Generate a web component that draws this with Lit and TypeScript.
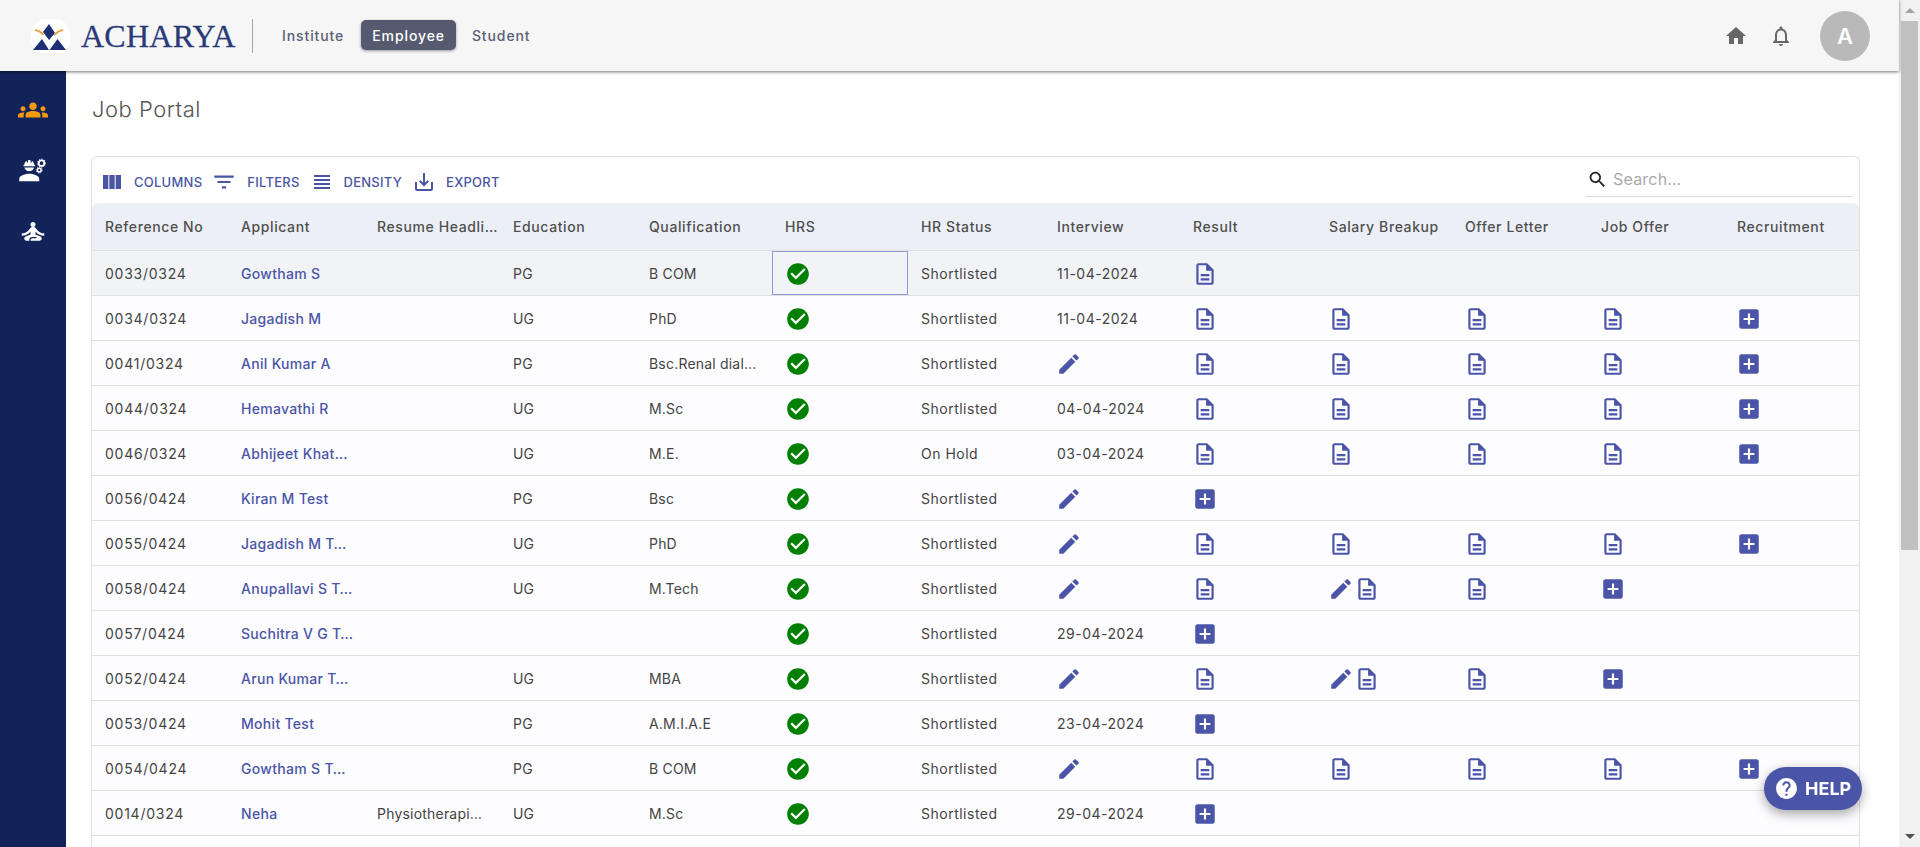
import { LitElement, html, css, svg } from "lit";
import { customElement } from "lit/decorators.js";

const P = {
  columns: "M14.67 5v14H9.33V5h5.34zm1 14H21V5h-5.33v14zm-7.34 0V5H3v14h5.33z",
  filter: "M10 18h4v-2h-4v2zM3 6v2h18V6H3zm3 7h12v-2H6v2z",
  density: "M4 15h16v-2H4v2zm0 4h16v-2H4v2zm0-8h16V9H4v2zm0-6v2h16V5H4z",
  save: "M19 12v7H5v-7H3v7c0 1.1.9 2 2 2h14c1.1 0 2-.9 2-2v-7h-2zm-6 .67l2.59-2.58L17 11.5l-5 5-5-5 1.41-1.41L11 12.67V3h2z",
  search: "M15.5 14h-.79l-.28-.27C15.41 12.59 16 11.11 16 9.5 16 5.91 13.09 3 9.5 3S3 5.91 3 9.5 5.91 16 9.5 16c1.61 0 3.09-.59 4.23-1.57l.27.28v.79l5 4.99L20.49 19l-4.99-5zm-6 0C7.01 14 5 11.99 5 9.5S7.01 5 9.5 5 14 7.01 14 9.5 11.99 14 9.5 14z",
  home: "M10 20v-6h4v6h5v-8h3L12 3 2 12h3v8z",
  bell: "M12 22c1.1 0 2-.9 2-2h-4c0 1.1.9 2 2 2zm6-6v-5c0-3.07-1.63-5.64-4.5-6.32V4c0-.83-.67-1.5-1.5-1.5s-1.5.67-1.5 1.5v.68C7.64 5.36 6 7.92 6 11v5l-2 2v1h16v-1l-2-2zm-2 1H8v-6c0-2.48 1.51-4.5 4-4.5s4 2.02 4 4.5v6z",
  check: "M12 2C6.48 2 2 6.48 2 12s4.48 10 10 10 10-4.48 10-10S17.52 2 12 2zm-2 15l-5-5 1.41-1.41L10 14.17l7.59-7.59L19 8l-9 9z",
  doc: "M8 16h8v2H8zm0-4h8v2H8zm6-10H6c-1.1 0-2 .9-2 2v16c0 1.1.89 2 1.99 2H18c1.1 0 2-.9 2-2V8l-6-6zm4 18H6V4h7v5h5v11z",
  edit: "M3 17.25V21h3.75L17.81 9.94l-3.75-3.75L3 17.25zM20.71 7.04c.39-.39.39-1.02 0-1.41l-2.34-2.34a.9959.9959 0 0 0-1.41 0l-1.83 1.83 3.75 3.75 1.83-1.83z",
  add: "M19 3H5c-1.11 0-2 .9-2 2v14c0 1.1.89 2 2 2h14c1.1 0 2-.9 2-2V5c0-1.1-.9-2-2-2zm-2 10h-4v4h-2v-4H7v-2h4V7h2v4h4v2z",
  help: "M12 2C6.48 2 2 6.48 2 12s4.48 10 10 10 10-4.48 10-10S17.52 2 12 2zm1 17h-2v-2h2v2zm2.07-7.75l-.9.92C13.45 12.9 13 13.5 13 15h-2v-.5c0-1.1.45-2.1 1.17-2.83l1.24-1.26c.37-.36.59-.86.59-1.41 0-1.1-.9-2-2-2s-2 .9-2 2H8c0-2.21 1.79-4 4-4s4 1.79 4 4c0 .88-.36 1.68-.93 2.25z",
  groups: "M12 12.75c1.63 0 3.07.39 4.24.9 1.08.48 1.76 1.56 1.76 2.73V18H6v-1.61c0-1.18.68-2.26 1.76-2.73 1.17-.52 2.61-.91 4.24-.91zM4 13c1.1 0 2-.9 2-2s-.9-2-2-2-2 .9-2 2 .9 2 2 2zm1.13 1.1c-.37-.06-.74-.1-1.13-.1-.99 0-1.93.21-2.78.58C.48 14.9 0 15.62 0 16.43V18h4.5v-1.61c0-.83.23-1.61.63-2.29zM20 13c1.1 0 2-.9 2-2s-.9-2-2-2-2 .9-2 2 .9 2 2 2zm4 3.43c0-.81-.48-1.53-1.22-1.85-.85-.37-1.79-.58-2.78-.58-.39 0-.76.04-1.13.1.4.68.63 1.46.63 2.29V18H24v-1.57zM12 6c1.66 0 3 1.34 3 3s-1.34 3-3 3-3-1.34-3-3 1.34-3 3-3z",
  yoga: "M12 8a2 2 0 1 0 0-4 2 2 0 0 0 0 4zm9 7v-2c-2.24 0-4.16-.96-5.6-2.68l-1.34-1.6A1.99 1.99 0 0 0 12.53 8h-1.05c-.59 0-1.15.26-1.53.72l-1.34 1.6C7.16 12.04 5.24 13 3 13v2c2.77 0 5.19-1.17 7-3.25V14l-3.88 1.55c-.67.27-1.12.93-1.12 1.66C5 18.2 5.8 19 6.79 19H9v-.5a2.5 2.5 0 0 1 2.5-2.5h3c.28 0 .5.22.5.5s-.22.5-.5.5h-3c-.83 0-1.5.67-1.5 1.5v.5h7.21c.99 0 1.79-.8 1.79-1.79 0-.73-.45-1.39-1.12-1.66L14 14v-2.25c1.81 2.08 4.23 3.25 7 3.25z",
  engineer: "M9 15c-2.67 0-8 1.34-8 4v2h16v-2c0-2.66-5.33-4-8-4zM4.74 9h8.53c.27 0 .49-.22.49-.49v-.02c0-.27-.22-.49-.49-.49H13c0-1.48-.81-2.75-2-3.45v.95c0 .28-.22.5-.5.5s-.5-.22-.5-.5V4.14C9.68 4.06 9.35 4 9 4s-.68.06-1 .14V5.5c0 .28-.22.5-.5.5S7 5.78 7 5.5v-.95C5.81 5.25 5 6.52 5 8h-.26c-.27 0-.49.22-.49.49v.03c0 .26.22.48.49.48zM9 13c1.86 0 3.41-1.28 3.86-3H5.14c.45 1.72 2 3 3.86 3z",
};

const icon = (d: string, cls = "") => html`<svg class="ic ${cls}" viewBox="0 0 24 24"><path d=${d}></path></svg>`;

type Cell = string;

const HEAD = ["Reference No", "Applicant", "Resume Headli…", "Education", "Qualification", "HRS", "HR Status", "Interview", "Result", "Salary Breakup", "Offer Letter", "Job Offer", "Recruitment"];

const ROWS: [string, string, string, string, string, string, Cell, Cell, Cell, Cell, Cell, Cell][] = [
  ["0033/0324", "Gowtham S", "", "PG", "B COM", "Shortlisted", "11-04-2024", "doc", "", "", "", ""],
  ["0034/0324", "Jagadish M", "", "UG", "PhD", "Shortlisted", "11-04-2024", "doc", "doc", "doc", "doc", "add"],
  ["0041/0324", "Anil Kumar A", "", "PG", "Bsc.Renal dial…", "Shortlisted", "edit", "doc", "doc", "doc", "doc", "add"],
  ["0044/0324", "Hemavathi R", "", "UG", "M.Sc", "Shortlisted", "04-04-2024", "doc", "doc", "doc", "doc", "add"],
  ["0046/0324", "Abhijeet Khat…", "", "UG", "M.E.", "On Hold", "03-04-2024", "doc", "doc", "doc", "doc", "add"],
  ["0056/0424", "Kiran M Test", "", "PG", "Bsc", "Shortlisted", "edit", "add", "", "", "", ""],
  ["0055/0424", "Jagadish M T…", "", "UG", "PhD", "Shortlisted", "edit", "doc", "doc", "doc", "doc", "add"],
  ["0058/0424", "Anupallavi S T…", "", "UG", "M.Tech", "Shortlisted", "edit", "doc", "editdoc", "doc", "add", ""],
  ["0057/0424", "Suchitra V G T…", "", "", "", "Shortlisted", "29-04-2024", "add", "", "", "", ""],
  ["0052/0424", "Arun Kumar T…", "", "UG", "MBA", "Shortlisted", "edit", "doc", "editdoc", "doc", "add", ""],
  ["0053/0424", "Mohit Test", "", "PG", "A.M.I.A.E", "Shortlisted", "23-04-2024", "add", "", "", "", ""],
  ["0054/0424", "Gowtham S T…", "", "PG", "B COM", "Shortlisted", "edit", "doc", "doc", "doc", "doc", "add"],
  ["0014/0324", "Neha", "Physiotherapi…", "UG", "M.Sc", "Shortlisted", "29-04-2024", "add", "", "", "", ""],
];

const logo = svg`<svg class="logo" viewBox="0 0 42 34">
  <circle cx="20.5" cy="18" r="20" fill="#fff"></circle>
  <path d="M19 5l6 9-6 7-6-8z" fill="#1f2f76"></path>
  <path d="M3 31l9-11 7 11zM19.5 31l8-11 8.500 11z" fill="#1f2f76"></path>
  <path d="M5 11c3 .5 6 2 8.500 5M33 11c-3 .5-6 2-8.500 5" stroke="#e9a53a" stroke-width="1.800" fill="none"></path>
</svg>`;

const engineerIcon = svg`<svg class="side-ic eng" viewBox="0 0 24 24" fill="#fff">
  <path d=${P.engineer}></path>
  <circle cx="18.800" cy="6.500" r="2.200" fill="none" stroke="#fff" stroke-width="1.400"></circle>
  <circle cx="18.800" cy="6.500" r="3.200" fill="none" stroke="#fff" stroke-width=".8" stroke-dasharray="1 1.100"></circle>
  <circle cx="17" cy="12" r="1.500" fill="none" stroke="#fff" stroke-width="1.200"></circle>
  <circle cx="17" cy="12" r="2.400" fill="none" stroke="#fff" stroke-width=".7" stroke-dasharray=".9 .9"></circle>
</svg>`;

@customElement("app-root")
export class AppRoot extends LitElement {
  static styles = css`
    :host { display: flex; height: 100vh; overflow: hidden; font-family: Inter, Roboto, "Liberation Sans", sans-serif; font-size: 14px; color: #444; background: #fff; letter-spacing: .2px; }
    * { box-sizing: border-box; }
    .ic { width: 26px; height: 26px; fill: currentColor; display: block; flex: none; }
    .page { flex: 1; min-width: 0; display: flex; flex-direction: column; }
    header { height: 71px; flex: none; background: #f6f6f6; display: flex; align-items: center; padding: 0 29px 0 30px; box-shadow: 0 1px 3px rgba(0,0,0,.55); position: relative; z-index: 2; }
    .logo { width: 42px; height: 34px; display: block; }
    .brand { font-family: "Liberation Serif", serif; font-size: 32px; color: #2a3a78; margin: 1px 0 0 9px; letter-spacing: .25px; line-height: 34px; width: 171px; -webkit-text-stroke: .3px #2a3a78; }
    .divider { width: 1px; height: 34px; background: #a9a9a9; margin-right: 18px; }
    .nav { display: flex; align-items: center; font-weight: 500; color: #5b5f78; margin: -1px 0 0 0; letter-spacing: .9px; }
    .nav span { padding: 0 11px; height: 30px; display: flex; align-items: center; border-radius: 5px; }
    .nav .on { background: #555a70; color: #fff; box-shadow: 0 1px 3px rgba(0,0,0,.4); margin: 0 5px 0 6px; }
    .right { margin-left: auto; display: flex; align-items: center; color: #666; }
    .right .ic { width: 24px; height: 24px; }
    .right .bell { margin-left: 21px; }
    .avatar { width: 50px; height: 50px; border-radius: 50%; background: #b9b9b9; color: #fff; font-size: 22px; font-weight: 600; display: flex; align-items: center; justify-content: center; margin-left: 27px; letter-spacing: 0; }
    .body { flex: 1; display: flex; min-height: 0; }
    aside { width: 66px; flex: none; background: #12235a; display: flex; flex-direction: column; align-items: center; padding-top: 24px; gap: 31px; }
    .side-ic { width: 30px; height: 30px; display: block; }
    .side-ic.act { fill: #f59a0c; }
    .side-ic.wh { fill: #fff; }
    .side-ic.eng { margin-top: -1px; margin-bottom: 1px; }
    main { flex: 1; min-width: 0; padding: 0 39px 0 25px; overflow: hidden; }
    h1 { margin: 0; padding: 25px 0 0 1px; height: 85px; font-size: 22px; font-weight: 300; color: #555; letter-spacing: .5px; line-height: 26px; }
    .card { border: 1px solid #e0e0e0; border-bottom: 0; border-radius: 6px 6px 0 0; }
    .toolbar { height: 46px; display: flex; align-items: center; padding: 4px 6px 0 8px; color: #4a55a2; font-size: 13px; font-weight: 500; letter-spacing: .25px; }
    .tb { display: flex; align-items: center; gap: 10px; margin-right: 10px; }
    .tb .ic { width: 24px; height: 24px; }
    .tb .ic.f { width: 26px; height: 26px; margin-left: -1px; }
    .search { margin-left: auto; align-self: flex-end; margin-bottom: 6px; width: 267px; height: 40px; border-bottom: 1px solid #d9d9d9; display: flex; align-items: center; gap: 5px; padding: 5px 0 0 1px; color: #222; }
    .search .ic { width: 21px; height: 21px; }
    .search span { color: #aaa; font-size: 16px; font-weight: 400; letter-spacing: .2px; }
    .row { display: grid; grid-template-columns: repeat(13, 136px); height: 45px; border-bottom: 1px solid #e0e0e0; background: #fdfcff; }
    .row.head { height: 48px; background: #edeff7; font-weight: 500; color: #505050; border-radius: 6px 6px 0 0; letter-spacing: .6px; }
    .row.sel { background: #f1f3f7; }
    .cell { padding: 0 13px; display: flex; align-items: center; white-space: nowrap; overflow: hidden; min-width: 0; }
    .cell.iconcell { padding: 2px 0 0 12px; color: #4a55a8; overflow: visible; }
    .cell.iconcell.ok { color: #008000; padding-left: 13px; }
    .cell.focus { outline: 1px solid #8f9bd2; outline-offset: -1px; }
    .name { color: #4a55a8; font-weight: 500; letter-spacing: .3px; }
    .ref { letter-spacing: .75px; }
    .status { letter-spacing: .5px; }
    .date { letter-spacing: .5px; }
    .help { position: fixed; left: 1764px; top: 767px; width: 98px; height: 43px; border-radius: 22px; background: #4a55a8; color: #fff; display: flex; align-items: center; padding-left: 10px; gap: 6px; font-size: 18px; font-weight: 700; box-shadow: 0 4px 12px rgba(0,0,0,.35); letter-spacing: 0; z-index: 3; }
    .help .ic { width: 25px; height: 25px; }
    .sb { width: 21px; flex: none; background: #f1f1f1; display: flex; flex-direction: column; align-items: center; padding: 0 2px; }
    .arrow { height: 21px; flex: none; display: flex; align-items: center; justify-content: center; }
    .up { width: 0; height: 0; border: 5px solid transparent; border-top: 0; border-bottom: 5px solid #a3a3a3; }
    .down { width: 0; height: 0; border: 5px solid transparent; border-bottom: 0; border-top: 5px solid #505050; }
    .thumb { width: 17px; height: 529px; background: #c1c1c1; flex: none; }
    .gap { flex: 1; }
  `;

  cellView(v: Cell) {
    if (v === "doc") return html`<div class="cell iconcell">${icon(P.doc)}</div>`;
    if (v === "add") return html`<div class="cell iconcell">${icon(P.add)}</div>`;
    if (v === "edit") return html`<div class="cell iconcell">${icon(P.edit)}</div>`;
    if (v === "editdoc") return html`<div class="cell iconcell">${icon(P.edit)}${icon(P.doc)}</div>`;
    return html`<div class="cell date">${v}</div>`;
  }

  render() {
    return html`
      <div class="page">
        <header>
          ${logo}
          <div class="brand">ACHARYA</div>
          <div class="divider"></div>
          <div class="nav"><span>Institute</span><span class="on">Employee</span><span>Student</span></div>
          <div class="right">
            ${icon(P.home)}
            ${icon(P.bell, "bell")}
            <div class="avatar">A</div>
          </div>
        </header>
        <div class="body">
          <aside>
            <svg class="side-ic act" viewBox="0 0 24 24"><path d=${P.groups}></path></svg>
            ${engineerIcon}
            <svg class="side-ic wh" viewBox="0 0 24 24"><path d=${P.yoga}></path></svg>
          </aside>
          <main>
            <h1>Job Portal</h1>
            <div class="card">
              <div class="toolbar">
                <div class="tb">${icon(P.columns)}COLUMNS</div>
                <div class="tb">${icon(P.filter, "f")}FILTERS</div>
                <div class="tb">${icon(P.density)}DENSITY</div>
                <div class="tb">${icon(P.save)}EXPORT</div>
                <div class="search">${icon(P.search)}<span>Search…</span></div>
              </div>
              <div class="row head">${HEAD.map((h) => html`<div class="cell">${h}</div>`)}</div>
              ${ROWS.map((r, i) => html`
                <div class="row ${i === 0 ? "sel" : ""}">
                  <div class="cell ref">${r[0]}</div>
                  <div class="cell name">${r[1]}</div>
                  <div class="cell">${r[2]}</div>
                  <div class="cell">${r[3]}</div>
                  <div class="cell">${r[4]}</div>
                  <div class="cell iconcell ok ${i === 0 ? "focus" : ""}">${icon(P.check)}</div>
                  <div class="cell status">${r[5]}</div>
                  ${r.slice(6).map((c) => this.cellView(c))}
                </div>`)}
              <div class="row"></div>
            </div>
          </main>
        </div>
      </div>
      <div class="sb">
        <div class="arrow"><div class="up"></div></div>
        <div class="thumb"></div>
        <div class="gap"></div>
        <div class="arrow"><div class="down"></div></div>
      </div>
      <div class="help">${icon(P.help)}HELP</div>
    `;
  }
}
